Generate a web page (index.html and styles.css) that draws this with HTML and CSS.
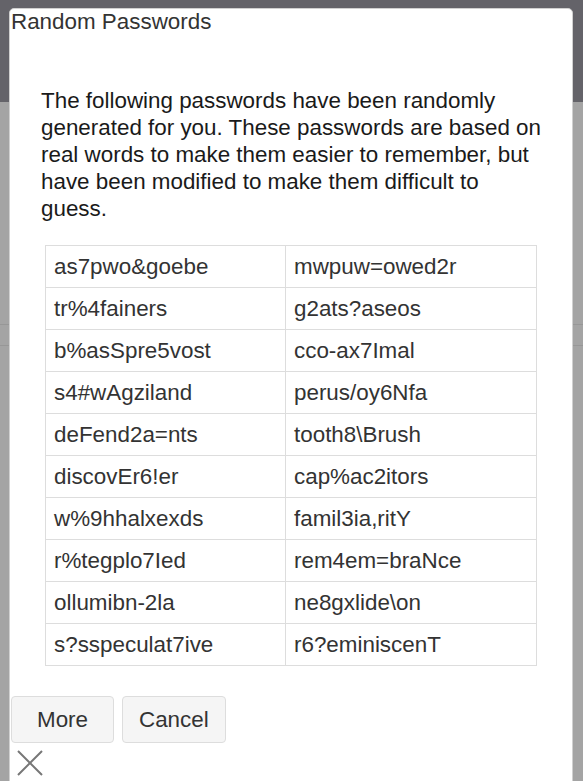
FILE: index.html
```html
<!DOCTYPE html>
<html lang="en">
  <head>
    <meta charset="UTF-8">
    <meta name="viewport" content="width=device-width, initial-scale=1.0">
    <title>Random Passwords</title>
    <link rel="stylesheet" href="styles.css">
  </head>
  <body>
    <!-- page underneath, dimmed by the dialog -->
    <div class="page-header"></div>
    <div class="page-body">
      <div class="page-row"></div>
      <div class="page-row"></div>
    </div>

    <div class="dialog">
      <div class="dialog-title">Random Passwords</div>
      <div class="dialog-content">
        <p>The following passwords have been randomly generated for you. These passwords are based on real words to make them easier to remember, but have been modified to make them difficult to guess.</p>
        <table class="pw-table">
          <tr><td>as7pwo&amp;goebe</td><td>mwpuw=owed2r</td></tr>
          <tr><td>tr%4fainers</td><td>g2ats?aseos</td></tr>
          <tr><td>b%asSpre5vost</td><td>cco-ax7Imal</td></tr>
          <tr><td>s4#wAgziland</td><td>perus/oy6Nfa</td></tr>
          <tr><td>deFend2a=nts</td><td>tooth8\Brush</td></tr>
          <tr><td>discovEr6!er</td><td>cap%ac2itors</td></tr>
          <tr><td>w%9hhalxexds</td><td>famil3ia,ritY</td></tr>
          <tr><td>r%tegplo7Ied</td><td>rem4em=braNce</td></tr>
          <tr><td>ollumibn-2la</td><td>ne8gxlide\on</td></tr>
          <tr><td>s?sspeculat7ive</td><td>r6?eminiscenT</td></tr>
        </table>
      </div>
      <div class="dialog-buttons">
        <button>More</button>
        <button>Cancel</button>
      </div>
      <button class="close" title="Close">
        <svg width="26" height="26" viewBox="0 0 26 26">
          <path d="M1 1 L25 25 M25 1 L1 25" stroke="#777" stroke-width="2" fill="none"/>
        </svg>
      </button>
    </div>
  </body>
</html>
```

FILE: styles.css
```css
html, body {
  margin: 0;
  padding: 0;
  height: 100%;
}

body {
  font-family: "Liberation Sans", Arial, sans-serif;
  background-color: #a4a4a4;
  overflow: hidden;
}

.page-header {
  height: 102px;
  background-color: #646369;
}

.page-body {
  padding-top: 222px;
}

.page-row {
  height: 20px;
  border-top: 1px solid #979797;
}

/* dialog */
.dialog {
  position: absolute;
  top: 8px;
  left: 9px;
  right: 10px;
  bottom: -20px;
  background-color: #fff;
  border: 1px solid #d0d0d0;
  border-radius: 5px 5px 0 0;
  box-sizing: border-box;
  padding: 0 1px;
}

.dialog-title {
  font-size: 22.4px;
  line-height: 26px;
  color: #333;
}

.dialog-content {
  padding: 52px 25px 0 30px;
}

.dialog-content p {
  margin: 0 0 23px 0;
  font-size: 22.4px;
  line-height: 27px;
  color: #1a1a1a;
}

.pw-table {
  border-collapse: collapse;
  margin-left: 4px;
  width: 492px;
}

.pw-table td {
  border: 1px solid #ddd;
  height: 42px;
  padding: 0 8px;
  font-size: 22.4px;
  color: #333;
  box-sizing: border-box;
}

.pw-table td:first-child {
  width: 240px;
}

.dialog-buttons {
  display: flex;
  gap: 8px;
  margin-top: 30px;
}

.dialog-buttons button {
  font-family: inherit;
  font-size: 22.4px;
  color: #333;
  background-color: #f5f5f5;
  border: 1px solid #ddd;
  border-radius: 4px;
  height: 47px;
  min-width: 103px;
  padding: 0 16px;
  cursor: pointer;
}

.close {
  display: block;
  margin: 7px 0 0 6px;
  padding: 0;
  border: none;
  background: none;
  cursor: pointer;
  line-height: 0;
}
```
